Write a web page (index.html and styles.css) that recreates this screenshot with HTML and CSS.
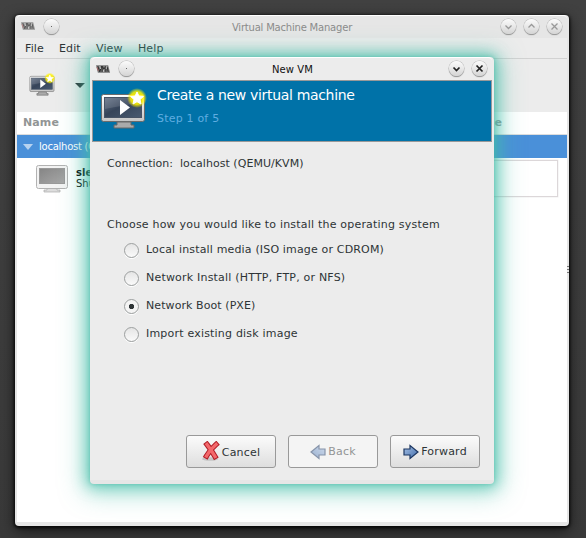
FILE: index.html
```html
<!DOCTYPE html>
<html lang="en">
<head>
<meta charset="utf-8">
<title>Virtual Machine Manager</title>
<link rel="stylesheet" href="styles.css">
</head>
<body>
<svg class="defs" width="0" height="0">
  <defs>
    <linearGradient id="screen" x1="0" y1="0" x2="1" y2="1"><stop offset="0" stop-color="#657287"/><stop offset=".45" stop-color="#364459"/><stop offset="1" stop-color="#495a70"/></linearGradient>
    <linearGradient id="frame" x1="0" y1="0" x2="0" y2="1"><stop offset="0" stop-color="#fff"/><stop offset="1" stop-color="#c4c4c4"/></linearGradient>
    <linearGradient id="off" x1="0" y1="0" x2="1" y2="1"><stop offset="0" stop-color="#858585"/><stop offset="1" stop-color="#a8a8a8"/></linearGradient>
    <linearGradient id="arrow" x1="0" y1="0" x2="1" y2="1"><stop offset="0" stop-color="#a9c3e6"/><stop offset="1" stop-color="#3f6bab"/></linearGradient>
    <radialGradient id="glow"><stop offset="0" stop-color="#fff200"/><stop offset=".65" stop-color="#fff200" stop-opacity=".85"/><stop offset="1" stop-color="#fff200" stop-opacity="0"/></radialGradient>
    <symbol id="vm" viewBox="0 0 48 44">
      <path d="M17 35h14v3h3v3H14v-3h3z" fill="#aaa" stroke="#666"/>
      <rect x="1.500" y="7.500" width="43" height="27" rx="2" fill="url(#frame)" stroke="#6b6b6b"/>
      <rect x="4.500" y="10.500" width="37" height="20" fill="url(#screen)" stroke="#475365"/>
      <path d="M5 11h36v5C28 17 17 20 5 22z" fill="#fff" opacity=".12"/>
      <path d="M20 13l10 7.500-10 7.500z" fill="#fff"/>
      <circle cx="37" cy="11" r="10" fill="url(#glow)"/>
      <path d="M37 5l1.900 4 4.500.5-3.400 3 1 4.500-4-2.300-4 2.300 1-4.500-3.400-3 4.500-.5z" fill="#fff" stroke="#fff"/>
    </symbol>
    <symbol id="logo" viewBox="0 0 16 10">
      <path d="M0 1h13l2 8H2z" fill="#777"/>
      <path d="M2 2l2 6 2-6M6.500 8V2l2 3 2-3v6M12 3l1 5" fill="none" stroke="#292929"/>
      <path d="M4 2l1 3M8 6v2M11 2v3" stroke="#ddd" stroke-width=".8"/>
      <path d="M1 3l1.500 4" stroke="#a66"/>
    </symbol>
    <symbol id="fwd" viewBox="0 0 16 16"><path d="M1 5h6V1.500L15 8l-8 6.500V11H1z" fill="url(#arrow)" stroke="#1d3762" stroke-width="1.200"/></symbol>
  </defs>
</svg>

<main class="window main">
  <header class="titlebar">
    <svg class="logo"><use href="#logo"/></svg><i class="orb dot"></i>
    <span class="title">Virtual Machine Manager</span>
    <i class="orb"><svg viewBox="0 0 15 15"><path d="M4.500 6.500l3 3 3-3"/></svg></i>
    <i class="orb"><svg viewBox="0 0 15 15"><path d="M4.500 8.500l3-3 3 3"/></svg></i>
    <i class="orb"><svg viewBox="0 0 15 15"><path d="M4.500 4.500l6 6m0-6l-6 6"/></svg></i>
  </header>
  <nav class="menu"><span class="m1">File</span><span class="m2">Edit</span><span class="m3">View</span><span>Help</span></nav>
  <div class="toolbar"><svg class="tool"><use href="#vm"/></svg><i class="drop"></i></div>
  <section class="list">
    <div class="heads"><span>Name</span><span class="usage">CPU usage</span></div>
    <div class="host"><i class="expander"></i><span>localhost (QEMU)</span></div>
    <div class="guest">
      <svg class="monitor" viewBox="0 0 34 28"><path d="M12 23h10v2h3v2H9v-2h3z" fill="#ddd" stroke="#aaa" stroke-width=".7"/><rect x="1.500" y=".5" width="31" height="23" rx="2" fill="#f3f3f3" stroke="#b2b2b2"/><rect x="4.500" y="3.500" width="25" height="15" fill="url(#off)" stroke="#999"/></svg>
      <div class="guestname"><b>sles12</b><span>Shutoff</span></div>
      <div class="graph"></div>
    </div>
  </section>
  <i class="grip"></i>
</main>

<section class="window dialog">
  <header class="titlebar">
    <svg class="logo"><use href="#logo"/></svg><i class="orb dot"></i>
    <span class="title">New VM</span>
    <i class="orb"><svg viewBox="0 0 15 15"><path d="M4.500 6.500l3 3 3-3"/></svg></i>
    <i class="orb"><svg viewBox="0 0 15 15"><path d="M4.500 4.500l6 6m0-6l-6 6"/></svg></i>
  </header>
  <div class="banner">
    <svg class="big"><use href="#vm"/></svg>
    <div><h1>Create a new virtual machine</h1><p>Step 1 of 5</p></div>
  </div>
  <div class="content">
    <div class="connection"><span class="c1">Connection:</span><span class="c2">localhost (QEMU/KVM)</span></div>
    <p class="choose"><span>Choose how you would like to install the operating system</span></p>
    <div class="options">
      <label><i class="radio"></i><span class="o1">Local install media (ISO image or CDROM)</span></label>
      <label><i class="radio"></i><span class="o2">Network Install (HTTP, FTP, or NFS)</span></label>
      <label><i class="radio on"></i><span class="o3">Network Boot (PXE)</span></label>
      <label><i class="radio"></i><span class="o4">Import existing disk image</span></label>
    </div>
  </div>
  <footer class="actions">
    <button class="cancel"><svg width="18" height="20" viewBox="0 0 18 20"><ellipse cx="8" cy="18" rx="8" ry="1.800" fill="#c4c4c4"/><path d="M5 3.500q4 5 8 12M14 3.500q-6 5-9.500 11.500" fill="none" stroke="#b01c26" stroke-width="5.400" stroke-linecap="square"/><path d="M5 3.500q4 5 8 12M14 3.500q-6 5-9.500 11.500" fill="none" stroke="#f3686b" stroke-width="3.400" stroke-linecap="square"/></svg><span>Cancel</span></button>
    <button class="back"><svg width="16" height="16"><use href="#fwd"/></svg><span>Back</span></button>
    <button class="forward"><svg width="16" height="16"><use href="#fwd"/></svg><span>Forward</span></button>
  </footer>
</section>
</body>
</html>
```
FILE: styles.css
```css
* { box-sizing: border-box; }
body { margin: 0; width: 586px; height: 538px; overflow: hidden; background: linear-gradient(#414141, #393939); font: 11px "DejaVu Sans", sans-serif; color: #2e3436; position: relative; }
.defs { position: absolute; }
i { font-style: normal; display: block; flex: none; }
svg { flex: none; display: block; }
span { white-space: nowrap; }
.window { position: absolute; display: flex; flex-direction: column; background: #ececec; }
.main { left: 15px; top: 15px; width: 554px; height: 511px; border-radius: 4px; padding: 0 2px 4px; background: #e6e6e6; box-shadow: 0 1px 3px 1px #080808, 0 4px 14px rgba(0,0,0,.65); }
.titlebar { height: 23px; flex: none; display: flex; align-items: center; background: #e6e6e6; border-top: 1px solid #fff; border-radius: 4px 4px 0 0; gap: 8px; }
.logo { width: 15px; height: 10px; }
.title { flex: 1; text-align: center; font-size: 10px; }
.orb { width: 15px; height: 15px; border-radius: 50%; background: linear-gradient(#fbfbfb, #d5d5d5); box-shadow: 0 0 0 .5px #b4b4b4, 0 1px 1px #777; position: relative; }
.orb svg { width: 15px; height: 15px; fill: none; stroke: #222; stroke-width: 1.700; }
.dot::after { content: ""; position: absolute; left: 7px; top: 7px; width: 1px; height: 1px; background: #666; }
.main .titlebar { padding: 0 5px 2px 4px; }
.main .title { color: #8c8c8c; padding-left: 24px; letter-spacing: -.2px; padding-top: 2px; }
.main .orb svg { stroke: #999; stroke-width: 1.300; }
.main .logo { opacity: .75; }
.menu { height: 21px; flex: none; display: flex; align-items: center; background: #ececec; border-bottom: 1px solid #d2d2d2; padding-left: 8px; letter-spacing: .1px; }
.m1 { width: 34px; } .m2 { width: 37px; } .m3 { width: 42px; }
.toolbar { height: 53px; flex: none; display: flex; background: #ececec; padding: 13px 0 0 12px; }
.tool { width: 27px; height: 25px; }
.drop { margin: 11px 0 0 19px; border: 5px solid transparent; border-top-color: #2e3436; border-bottom: 0; height: 5px; }
.list { flex: 1; background: #fff; }
.heads { height: 23px; border-bottom: 1px solid #ddd; display: flex; align-items: center; justify-content: space-between; padding: 0 65px 2px 6px; font-weight: bold; color: #929595; letter-spacing: .1px; }
.host { height: 23px; background: #4a90d9; color: #fff; display: flex; align-items: center; padding-left: 6px; gap: 6px; font-size: 10px; letter-spacing: -.25px; }
.expander { border: 5px solid transparent; border-top: 6px solid #b7d3f0; border-bottom: 0; }
.guest { height: 45px; display: flex; padding: 2px 9px 0 18px; }
.monitor { width: 34px; height: 28px; margin-top: 5px; }
.guestname { display: flex; flex-direction: column; width: 60px; padding: 7px 0 0 7px; font-size: 10px; line-height: 11px; color: #000; }
.graph { flex: 1; height: 37px; border: 1px solid #dcd7d9; box-shadow: 0 0 0 .5px #eee; }
.grip { position: absolute; right: 0; top: 251px; width: 2px; height: 8px; background: repeating-linear-gradient(#777 0 1px, transparent 1px 3px); }
.dialog { left: 90px; top: 57px; width: 404px; height: 427px; border-radius: 4px; padding: 0 2px; border-bottom: 4px solid #e6e6e6; box-shadow: 0 0 4px rgba(67,185,165,.6), 0 0 14px 3px rgba(67,190,168,.6), 0 3px 24px 6px rgba(67,190,168,.5); }
.dialog .titlebar { padding: 0 5px 1px 4px; background: none; }
.dialog .title { color: #111; padding-left: 2px; padding-top: 2px; letter-spacing: .1px; }
.dialog::before { content: ""; position: absolute; z-index: -1; inset: 0 0 auto; height: 23px; background: #e6e6e6; border-radius: 4px 4px 0 0; }
.banner { height: 62px; flex: none; background: #0072a8; border: 1px solid #999; display: flex; padding: 6px 0 0 7px; color: #fff; }
.big { width: 48px; height: 44px; }
.banner > div { padding-left: 9px; }
h1 { margin: 0; font-size: 14px; font-weight: normal; line-height: 17px; letter-spacing: -.33px; }
.banner p { margin: 8px 0 0; line-height: 14px; color: #5fade0; letter-spacing: .2px; }
.content { flex: 1; padding: 14px 0 0 15px; letter-spacing: .2px; }
.connection { height: 16px; line-height: 16px; display: flex; }
.c1 { width: 73px; letter-spacing: 0; }
.c2 { letter-spacing: .05px; }
.o1 { letter-spacing: .16px; }
.o3 { letter-spacing: .08px; }
.choose { margin: 45px 0 0; line-height: 16px; }
.options { padding: 3px 0 0 17px; }
.options label { height: 28px; display: flex; align-items: center; gap: 7px; }
.options label span { margin-top: -2px; }
.radio { width: 15px; height: 15px; border: 1px solid #9c9f9f; border-radius: 50%; background: linear-gradient(#e5e5e5, #fafafa); box-shadow: 0 1px #fff; }
.on { background: radial-gradient(circle at 50% 50%, #2e3436 0 2.300px, #f4f4f4 3px); }
.actions { height: 45px; flex: none; padding: 0 12px 0 94px; display: flex; gap: 12px; }
button { width: 90px; height: 33px; padding: 0; display: flex; align-items: center; justify-content: center; gap: 2px; font: 11px "DejaVu Sans", sans-serif; letter-spacing: .2px; color: #2e3436; border: 1px solid #999; border-radius: 3px; background: linear-gradient(#fbfbfb, #dedede); }
.cancel span { padding-top: 2px; }
.cancel svg { margin-top: -2px; }
.back { background: #f4f4f4; color: #929595; }
.back svg { transform: scaleX(-1); opacity: .5; }
```
